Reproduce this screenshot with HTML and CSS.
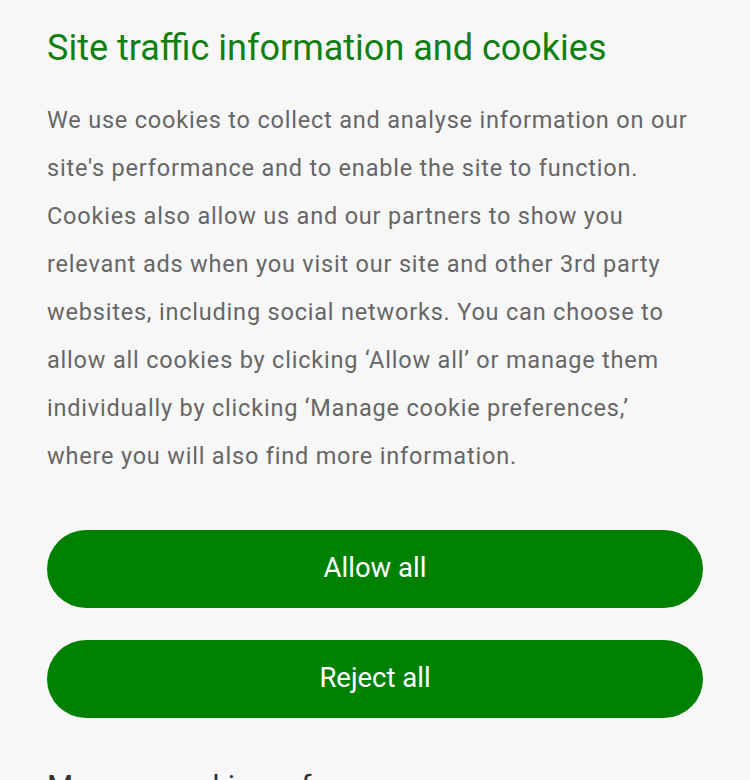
FILE: index.html
```html
<!DOCTYPE html>
<html lang="en">
<head>
<meta charset="utf-8">
<link rel="stylesheet" href="styles.css">
</head>
<body>
<div class="panel">
  <h1 class="title">Site traffic information and cookies</h1>
  <p class="text">We use cookies to collect and analyse information on our site's performance and to enable the site to function. Cookies also allow us and our partners to show you relevant ads when you visit our site and other 3rd party websites, including social networks. You can choose to allow all cookies by clicking ‘Allow all’ or manage them individually by clicking ‘Manage cookie preferences,’ where you will also find more information.</p>
  <div class="actions">
    <button class="btn">Allow all</button>
    <button class="btn">Reject all</button>
  </div>
  <h2 class="manage">Manage cookie preferences</h2>
</div>
</body>
</html>
```
FILE: styles.css
```css
html, body {
  margin: 0;
  padding: 0;
  background: #f7f7f7;
  overflow: hidden;
}
.panel {
  padding: 27px 47px 0 47px;
  font-family: Roboto, "Noto Sans", sans-serif;
}
.title {
  margin: 0;
  font-size: 36px;
  line-height: 42px;
  font-weight: 400;
  color: #117f11;
}
.text {
  margin: 27px 14px 0 0;
  font-size: 23.5px;
  line-height: 48px;
  letter-spacing: 0.8px;
  color: #666666;
}
.actions {
  margin-top: 50px;
  display: flex;
  flex-direction: column;
  gap: 32px;
}
.btn {
  height: 78px;
  border: none;
  border-radius: 39px;
  background: #008000;
  color: #ffffff;
  font-family: Roboto, "Noto Sans", sans-serif;
  font-size: 27.5px;
  padding: 0 0 3px 0;
}
.manage {
  margin: 50px 0 0 0;
  font-size: 30px;
  font-weight: 400;
  color: #333333;
}
```
